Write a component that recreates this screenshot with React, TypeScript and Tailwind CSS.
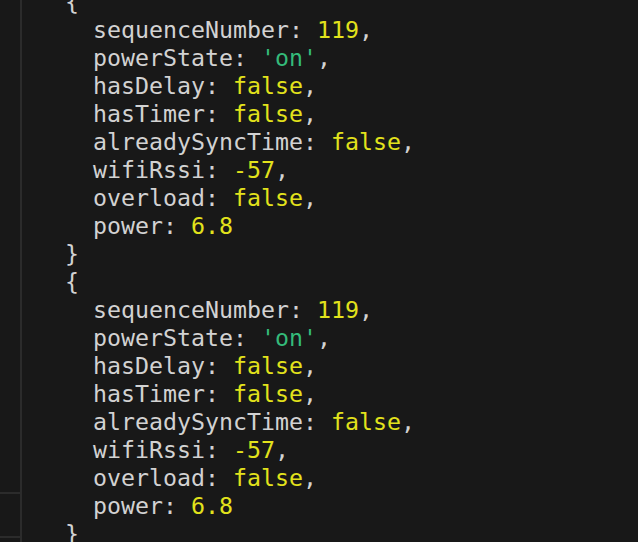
import React from "react";

type Tok = { t: string; c?: "k" | "y" | "g" };

const record: Tok[][] = [
  [{ t: "sequenceNumber: " }, { t: "119", c: "y" }, { t: "," }],
  [{ t: "powerState: " }, { t: "'on'", c: "g" }, { t: "," }],
  [{ t: "hasDelay: " }, { t: "false", c: "y" }, { t: "," }],
  [{ t: "hasTimer: " }, { t: "false", c: "y" }, { t: "," }],
  [{ t: "alreadySyncTime: " }, { t: "false", c: "y" }, { t: "," }],
  [{ t: "wifiRssi: " }, { t: "-57", c: "y" }, { t: "," }],
  [{ t: "overload: " }, { t: "false", c: "y" }, { t: "," }],
  [{ t: "power: " }, { t: "6.8", c: "y" }],
];

const color = (c?: string) =>
  c === "y" ? "text-[#e2e21c]" : c === "g" ? "text-[#34bb7a]" : "text-[#d2d2d2]";

const Block = () => (
  <>
    <div className="pl-[65px]">{"{"}</div>
    {record.map((line, i) => (
      <div key={i} className="pl-[93px]">
        {line.map((tok, j) => (
          <span key={j} className={color(tok.c)}>
            {tok.t}
          </span>
        ))}
      </div>
    ))}
    <div className="pl-[65px]">{"}"}</div>
  </>
);

export default function App() {
  return (
    <div className="relative w-[638px] h-[542px] overflow-hidden bg-[#181818]">
      {/* side panel edge */}
      <div className="absolute left-0 top-0 w-[22px] h-full border-r-2 border-[#2b2b2b]">
        <div className="absolute left-0 right-0 top-[492px] h-[2px] bg-[#2b2b2b]" />
        <div className="absolute left-0 right-0 top-[536px] h-[2px] bg-[#2b2b2b]" />
      </div>
      <div
        className="-mt-[12px] whitespace-pre text-[23.25px] leading-[28px] text-[#d2d2d2]"
        style={{ fontFamily: '"DejaVu Sans Mono", monospace' }}
      >
        <Block />
        <Block />
      </div>
    </div>
  );
}
